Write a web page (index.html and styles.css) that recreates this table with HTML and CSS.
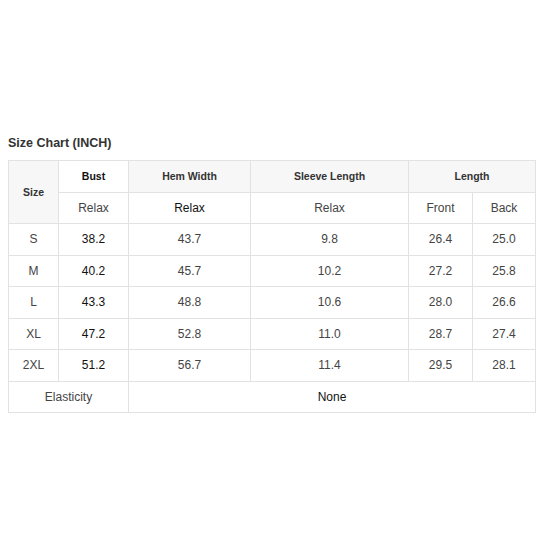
FILE: index.html
```html
<!DOCTYPE html>
<html>
<head>
<meta charset="utf-8">
<link rel="stylesheet" href="styles.css">
</head>
<body>
<div class="page">
  <h2 class="title">Size Chart (INCH)</h2>
  <table class="chart">
    <colgroup>
      <col class="c-size"><col class="c-bust"><col class="c-hem"><col class="c-sleeve"><col class="c-front"><col class="c-back">
    </colgroup>
    <tr>
      <th class="hd" rowspan="2">Size</th>
      <th class="hd white dark">Bust</th>
      <th class="hd">Hem Width</th>
      <th class="hd">Sleeve Length</th>
      <th class="hd" colspan="2">Length</th>
    </tr>
    <tr>
      <td>Relax</td>
      <td class="dark">Relax</td>
      <td>Relax</td>
      <td>Front</td>
      <td>Back</td>
    </tr>
    <tr><td>S</td><td class="dark">38.2</td><td>43.7</td><td>9.8</td><td>26.4</td><td>25.0</td></tr>
    <tr><td>M</td><td class="dark">40.2</td><td>45.7</td><td>10.2</td><td>27.2</td><td>25.8</td></tr>
    <tr><td>L</td><td class="dark">43.3</td><td>48.8</td><td>10.6</td><td>28.0</td><td>26.6</td></tr>
    <tr><td>XL</td><td class="dark">47.2</td><td>52.8</td><td>11.0</td><td>28.7</td><td>27.4</td></tr>
    <tr><td>2XL</td><td class="dark">51.2</td><td>56.7</td><td>11.4</td><td>29.5</td><td>28.1</td></tr>
    <tr><td colspan="2">Elasticity</td><td colspan="4" class="dark">None</td></tr>
  </table>
</div>
</body>
</html>
```

FILE: styles.css
```css
html, body {
  background: #fff;
}
body {
  margin: 8px;
  font-family: "Liberation Sans", Arial, sans-serif;
}
.page {
  padding-top: 128px;
}
.title {
  margin: 0 0 9px 0;
  font-size: 12.5px;
  line-height: 15px;
  font-weight: bold;
  color: #333;
}
.chart {
  border-collapse: collapse;
  width: 527px;
  table-layout: fixed;
}
.c-size { width: 50px; }
.c-bust { width: 70px; }
.c-hem { width: 122px; }
.c-sleeve { width: 158px; }
.c-front { width: 64px; }
.c-back { width: 63px; }
.chart tr {
  height: 31.5px;
}
.chart th, .chart td {
  border: 1px solid #e2e2e2;
  text-align: center;
  vertical-align: middle;
  padding: 0;
  font-size: 12px;
  color: #444;
}
.chart th.hd {
  background: #f7f7f7;
  font-size: 10.5px;
  font-weight: bold;
  color: #333;
}
.chart th.white {
  background: #fff;
}
.chart .dark {
  color: #111;
}
.chart th.dark {
  color: #111;
}
```
